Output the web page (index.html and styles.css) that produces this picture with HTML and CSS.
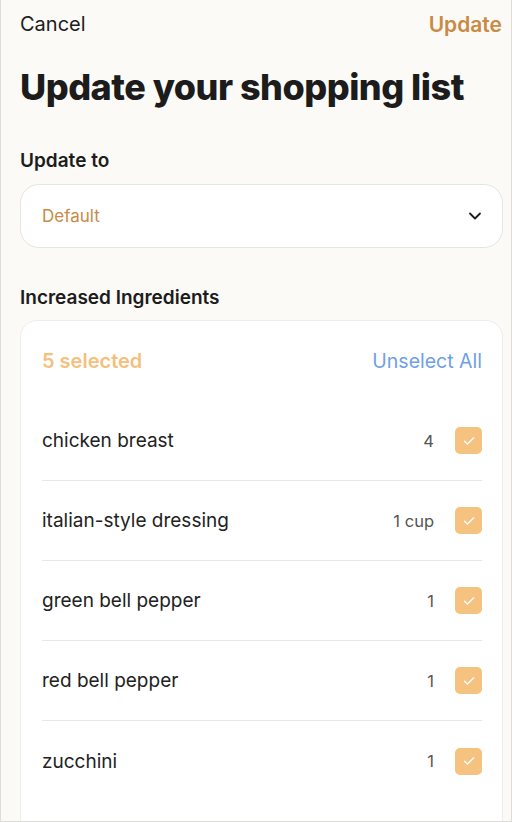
FILE: index.html
```html
<!DOCTYPE html>
<html lang="en">
  <head>
    <meta charset="UTF-8" />
    <meta name="viewport" content="width=device-width, initial-scale=1.0" />
    <title>Update your shopping list</title>
    <link rel="stylesheet" href="styles.css">
  </head>
  <body>
    <div class="screen">
      <div class="top-bar">
        <button class="cancel">Cancel</button>
        <button class="update">Update</button>
      </div>

      <h1 class="page-title">Update your shopping list</h1>

      <div class="section-label">Update to</div>
      <div class="select-box">
        <span class="select-value">Default</span>
        <svg class="chevron" width="16" height="16" viewBox="0 0 16 16">
          <path d="M3 5.5 L8 10.5 L13 5.5" fill="none" stroke="#1c1c1c" stroke-width="1.8" stroke-linecap="round" stroke-linejoin="round" />
        </svg>
      </div>

      <div class="section-label ingredients-label">Increased Ingredients</div>
      <div class="ingredient-card">
        <div class="card-header">
          <span class="selected-count">5 selected</span>
          <button class="unselect-all">Unselect All</button>
        </div>

        <div class="ingredient-row">
          <span class="ingredient-name">chicken breast</span>
          <span class="ingredient-qty">4</span>
          <span class="checkbox"><svg width="14" height="14" viewBox="0 0 14 14"><path d="M2.5 7.2 L5.6 10 L11.5 4" fill="none" stroke="#fff" stroke-width="1.4" stroke-linecap="round" stroke-linejoin="round" /></svg></span>
        </div>
        <div class="ingredient-row">
          <span class="ingredient-name">italian-style dressing</span>
          <span class="ingredient-qty">1 cup</span>
          <span class="checkbox"><svg width="14" height="14" viewBox="0 0 14 14"><path d="M2.5 7.2 L5.6 10 L11.5 4" fill="none" stroke="#fff" stroke-width="1.4" stroke-linecap="round" stroke-linejoin="round" /></svg></span>
        </div>
        <div class="ingredient-row">
          <span class="ingredient-name">green bell pepper</span>
          <span class="ingredient-qty">1</span>
          <span class="checkbox"><svg width="14" height="14" viewBox="0 0 14 14"><path d="M2.5 7.2 L5.6 10 L11.5 4" fill="none" stroke="#fff" stroke-width="1.4" stroke-linecap="round" stroke-linejoin="round" /></svg></span>
        </div>
        <div class="ingredient-row">
          <span class="ingredient-name">red bell pepper</span>
          <span class="ingredient-qty">1</span>
          <span class="checkbox"><svg width="14" height="14" viewBox="0 0 14 14"><path d="M2.5 7.2 L5.6 10 L11.5 4" fill="none" stroke="#fff" stroke-width="1.4" stroke-linecap="round" stroke-linejoin="round" /></svg></span>
        </div>
        <div class="ingredient-row">
          <span class="ingredient-name">zucchini</span>
          <span class="ingredient-qty">1</span>
          <span class="checkbox"><svg width="14" height="14" viewBox="0 0 14 14"><path d="M2.5 7.2 L5.6 10 L11.5 4" fill="none" stroke="#fff" stroke-width="1.4" stroke-linecap="round" stroke-linejoin="round" /></svg></span>
        </div>
      </div>
    </div>
  </body>
</html>
```

FILE: styles.css
```css
* {
  box-sizing: border-box;
}
html,
body {
  margin: 0;
  height: 100%;
}
body {
  font-family: Inter, "Noto Sans", sans-serif;
  color: #1c1c1c;
  background: #fbfaf6;
  overflow: hidden;
}
button {
  font-family: inherit;
  background: none;
  border: none;
  padding: 0;
  cursor: pointer;
}
.screen {
  height: 822px;
  padding: 0 9px 0 19px;
  border: 1px solid #dcdcd8;
  border-top: none;
  overflow: hidden;
}
.top-bar {
  display: flex;
  justify-content: space-between;
  align-items: center;
  height: 48px;
}
.cancel {
  font-size: 20px;
  color: #1c1c1c;
}
.update {
  font-size: 21px;
  font-weight: 600;
  color: #c98a45;
}
.page-title {
  margin: 17px 0 0;
  font-size: 36px;
  font-weight: 800;
  letter-spacing: -0.5px;
  line-height: 44px;
}
.section-label {
  margin-top: 40px;
  font-size: 19px;
  font-weight: 600;
  line-height: 24px;
}
.select-box {
  display: flex;
  justify-content: space-between;
  align-items: center;
  margin: 11px -1px 0 0;
  height: 64px;
  padding: 0 19px 0 21px;
  background: #fff;
  border: 1px solid #e5e5e2;
  border-radius: 19px;
}
.select-value {
  font-size: 17px;
  color: #c98a45;
}
.ingredients-label {
  margin-top: 38px;
}
.ingredient-card {
  margin: 10px -1px 0 0;
  padding: 0 20px 0 21px;
  background: #fff;
  border: 1px solid #eeede9;
  border-radius: 17px;
  height: 600px;
}
.card-header {
  display: flex;
  justify-content: space-between;
  align-items: center;
  height: 80px;
}
.selected-count {
  font-size: 20px;
  font-weight: 600;
  color: #f5bf7d;
}
.unselect-all {
  font-size: 19.5px;
  color: #6f9fe6;
}
.ingredient-row {
  display: flex;
  align-items: center;
  height: 80px;
  border-bottom: 1px solid #e7e7e4;
}
.ingredient-row:last-child {
  border-bottom: none;
}
.ingredient-name {
  flex: 1;
  font-size: 19px;
  color: #222;
}
.ingredient-qty {
  font-size: 16.5px;
  color: #555;
  margin-right: 21px;
}
.checkbox {
  display: flex;
  align-items: center;
  justify-content: center;
  width: 27px;
  height: 27px;
  border-radius: 5px;
  background: #f5c27f;
}
```
